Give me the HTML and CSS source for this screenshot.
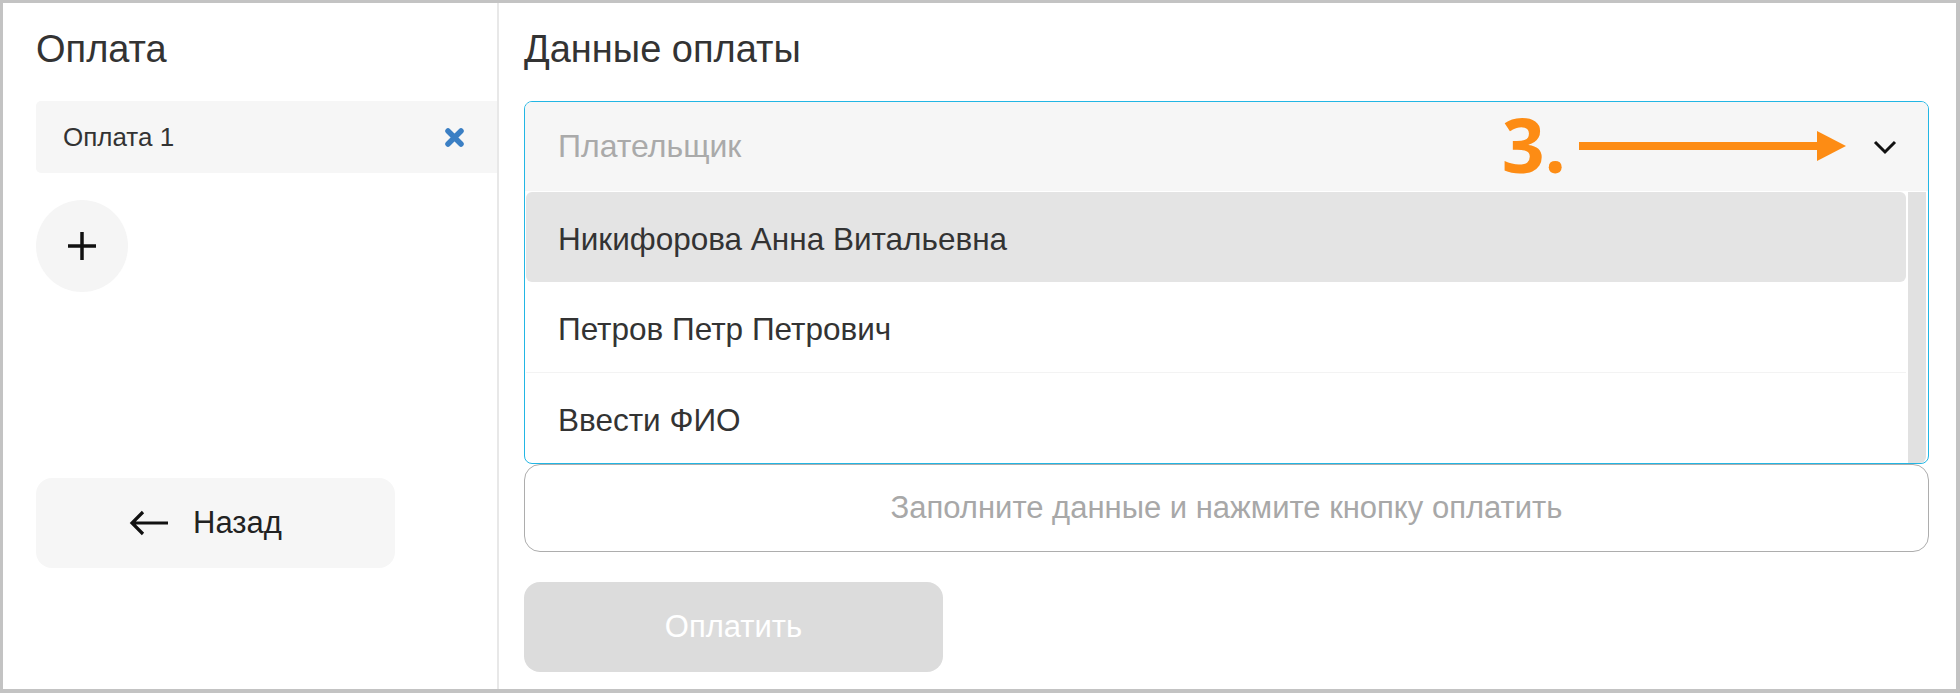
FILE: index.html
```html
<html>
    <head>
        <meta charset="utf-8">
        <title>Оплата</title>
        <link rel="stylesheet" href="styles.css">
    </head>
    <body>
        <div class="frame">
            <div class="left">
                <h1 class="title">Оплата</h1>
                <div class="pay-card">
                    <span>Оплата 1</span>
                    <svg class="remove" width="19" height="19" viewBox="0 0 19 19">
                        <path d="M3 3 L16 16 M16 3 L3 16" stroke="#3b7fc4" stroke-width="5.5" stroke-linecap="round"/>
                    </svg>
                </div>
                <div class="add">
                    <svg width="30" height="30" viewBox="0 0 30 30">
                        <path d="M15 1 V29 M1 15 H29" stroke="#111" stroke-width="3.5"/>
                    </svg>
                </div>
                <div class="back">
                    <svg width="40" height="28" viewBox="0 0 40 28">
                        <path d="M4 14 H40 M15 3 L4 14 L15 25" stroke="#111" stroke-width="3.2" fill="none"/>
                    </svg>
                    <span>Назад</span>
                </div>
            </div>
            <div class="right">
                <h1 class="title">Данные оплаты</h1>
                <div class="select">
                    <div class="select-head">
                        <span class="placeholder">Плательщик</span>
                        <svg width="24" height="16" viewBox="0 0 24 16">
                            <path d="M2 3 L12 13 L22 3" stroke="#111" stroke-width="3" fill="none"/>
                        </svg>
                        <div class="hint">
                            <span>3.</span>
                            <svg width="267" height="30" viewBox="0 0 267 30">
                                <rect x="0" y="11" width="240" height="8" fill="#fd8c14"/>
                                <path d="M238 0 L267 15 L238 30 Z" fill="#fd8c14"/>
                            </svg>
                        </div>
                    </div>
                    <div class="select-list">
                        <ul class="options">
                            <li class="active">Никифорова Анна Витальевна</li>
                            <li class="line">Петров Петр Петрович</li>
                            <li>Ввести ФИО</li>
                        </ul>
                        <div class="scroll"></div>
                    </div>
                </div>
                <div class="info">Заполните данные и нажмите кнопку оплатить</div>
                <div class="pay">Оплатить</div>
            </div>
        </div>
    </body>
</html>
```
FILE: styles.css
```css
*{
    font-family: "Liberation Sans", Arial, sans-serif;
    box-sizing: border-box;
}
body{
    margin: 0;
    background: #fff;
}
.frame{
    display: flex;
    width: 1960px;
    height: 693px;
    border: 3px solid #c3c3c3;
    border-right-width: 4px;
    border-bottom-width: 4px;
}
.title{
    margin: 0 0 30px 0;
    font-size: 38px;
    font-weight: 400;
    line-height: 44px;
    color: #333;
}

/* left column */
.left{
    width: 496px;
    padding: 24px 0 0 33px;
    border-right: 2px solid #e8e8e8;
}
.pay-card{
    display: flex;
    align-items: center;
    justify-content: space-between;
    height: 72px;
    padding: 0 33px 0 27px;
    background: #f6f6f6;
    border-radius: 5px 0 0 5px;
    font-size: 26px;
    color: #333;
}
.add{
    display: flex;
    align-items: center;
    justify-content: center;
    width: 92px;
    height: 92px;
    margin-top: 27px;
    border-radius: 50%;
    background: #f5f5f5;
}
.back{
    display: flex;
    align-items: center;
    gap: 25px;
    width: 359px;
    height: 90px;
    margin-top: 186px;
    padding-left: 92px;
    background: #f6f6f6;
    border-radius: 16px;
    font-size: 31px;
    color: #222;
}

/* right column */
.right{
    flex: 1;
    padding: 24px 27px 0 25px;
}
.select{
    border: 1px solid #22b6e4;
    border-radius: 8px;
}
.select-head{
    position: relative;
    display: flex;
    align-items: center;
    justify-content: space-between;
    height: 89px;
    padding: 0 31px 0 33px;
    background: #f6f6f6;
    border-radius: 7px 7px 0 0;
}
.placeholder{
    font-size: 32px;
    color: #aaa;
}
.hint{
    position: absolute;
    right: 82px;
    top: 0;
    bottom: 6px;
    display: flex;
    align-items: center;
    gap: 13px;
}
.hint span{
    font-family: "Open Sans", sans-serif;
    font-weight: 700;
    font-size: 75px;
    color: #fd8c14;
}
.hint svg{
    margin-top: 4px;
}
.select-list{
    display: flex;
    padding: 1px 2px 0 1px;
}
.options{
    flex: 1;
    list-style: none;
    margin: 0;
    padding: 0;
}
.options li{
    display: flex;
    align-items: center;
    height: 90px;
    padding: 5px 0 0 32px;
    font-size: 31.5px;
    color: #333;
}
.options li.active{
    background: #e4e4e4;
    border-radius: 6px;
}
.options li.line{
    height: 91px;
    border-bottom: 1px solid #f3f3f3;
}
.scroll{
    width: 18px;
    margin-left: 2px;
    background: #e1e1e1;
    border-radius: 0 0 6px 0;
}
.info{
    display: flex;
    align-items: center;
    justify-content: center;
    height: 88px;
    border: 1px solid #adadad;
    border-radius: 16px;
    font-size: 31px;
    color: #a8a8a8;
}
.pay{
    display: flex;
    align-items: center;
    justify-content: center;
    width: 419px;
    height: 90px;
    margin-top: 30px;
    background: #dcdcdc;
    border-radius: 16px;
    font-size: 31px;
    color: #fff;
}
```
